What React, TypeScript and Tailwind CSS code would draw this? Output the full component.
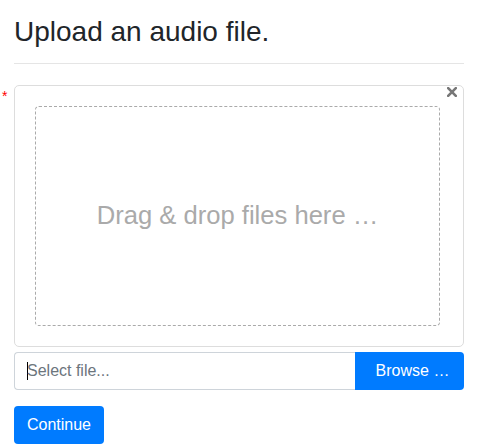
export default function App() {
  return (
    <div className="min-h-[444px] bg-white px-[14px] pt-[15px] text-[16px] text-[#212529] [font-family:'Liberation_Sans',Arial,sans-serif]">
      <h3 className="text-[28px] leading-[1.2] font-medium">Upload an audio file.</h3>
      <hr className="mt-[14px] mb-[21px] border-t border-[rgba(0,0,0,0.1)]" />

      <div className="relative">
        <span className="absolute -left-[12px] top-[4px] text-[14px] leading-none text-[#ff0000]">*</span>

        <div className="relative mb-[5px] rounded-[5px] border border-[#dddddd] p-[8px]">
          <button className="absolute right-[6px] top-[1px] text-[#777777]">
            <svg width="10" height="10" viewBox="0 0 10 10">
              <path d="M1.2 1.2 L8.8 8.8 M8.8 1.2 L1.2 8.8" stroke="currentColor" strokeWidth="2.6" strokeLinecap="square" />
            </svg>
          </button>
          <div className="mt-[12px] mr-[15px] mb-[12px] ml-[12px] flex h-[220px] items-center justify-center rounded-[4px] border border-dashed border-[#aaaaaa]">
            <span className="text-[25.6px] text-[#aaaaaa]">Drag &amp; drop files here …</span>
          </div>
        </div>

        <div className="flex h-[38px]">
          <div className="flex flex-1 items-center rounded-l-[4px] border border-r-0 border-[#ced4da] pl-[12px]">
            <span className="mr-[-1px] h-[18px] w-px bg-black" />
            <span className="text-[#6c757d]">Select file...</span>
          </div>
          <button className="w-[109px] rounded-r-[4px] bg-[#007bff] pl-[6px] text-white">
            Browse …
          </button>
        </div>
      </div>

      <button className="mt-[16px] h-[38px] w-[90px] rounded-[4px] bg-[#007bff] text-white">
        Continue
      </button>
    </div>
  );
}
